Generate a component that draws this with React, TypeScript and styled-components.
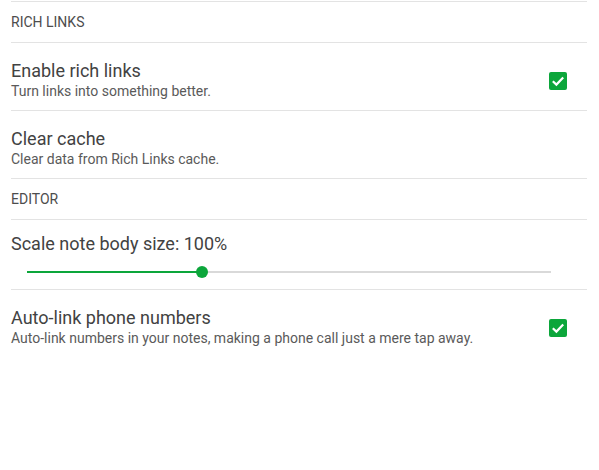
import React from "react";
import styled, { createGlobalStyle } from "styled-components";

const GlobalStyle = createGlobalStyle`
  body {
    margin: 0;
    background: #fff;
    font-family: Roboto, "Noto Sans", sans-serif;
  }
`;

const Page = styled.div`
  padding: 1px 12px 0 11px;
`;

const List = styled.div`
  border-top: 1px solid #e3e3e3;
  display: flex;
  flex-direction: column;
`;

const Header = styled.div`
  height: 40px;
  display: flex;
  align-items: center;
  font-size: 14px;
  color: #4d4d4d;
  text-transform: uppercase;
  border-bottom: 1px solid #e3e3e3;
`;

const Row = styled.div<{ last?: boolean }>`
  display: flex;
  align-items: center;
  padding: 17px 20px 10px 0;
  height: 40px;
  border-bottom: ${(p) => (p.last ? "none" : "1px solid #e3e3e3")};
`;

const TextBlock = styled.div`
  flex: 1;
  display: flex;
  flex-direction: column;
`;

const Title = styled.div`
  font-size: 18px;
  line-height: 22px;
  color: #424242;
`;

const Summary = styled.div`
  font-size: 14px;
  line-height: 18px;
  color: #5a5a5a;
`;

const Checkbox = styled.div`
  width: 18px;
  height: 18px;
  margin-top: 2px;
  border-radius: 2px;
  background: #0ca63b;
  display: flex;
  align-items: center;
  justify-content: center;
`;

const SliderRow = styled.div`
  padding: 13px 0 0 0;
  height: 56px;
  border-bottom: 1px solid #e3e3e3;
`;

const Track = styled.div`
  position: relative;
  margin: 16px 36px 0 16px;
  height: 2px;
  background: #d9d9d9;
`;

const Fill = styled.div`
  height: 2px;
  background: #0ca63b;
`;

const Thumb = styled.div`
  position: absolute;
  top: -5px;
  width: 12px;
  height: 12px;
  margin-left: -6px;
  border-radius: 50%;
  background: #0ca63b;
`;

const Check = () => (
  <Checkbox>
    <svg width="14" height="14" viewBox="0 0 14 14">
      <path d="M1.8 7.3 L5.4 10.6 L12.2 3.6" fill="none" stroke="#fff" strokeWidth="2.2" />
    </svg>
  </Checkbox>
);

const Preference = ({
  title,
  summary,
  checked,
  last,
}: {
  title: string;
  summary: string;
  checked?: boolean;
  last?: boolean;
}) => (
  <Row last={last}>
    <TextBlock>
      <Title>{title}</Title>
      <Summary>{summary}</Summary>
    </TextBlock>
    {checked && <Check />}
  </Row>
);

export default function App() {
  const value = 33.4;
  return (
    <Page>
      <GlobalStyle />
      <List>
        <Header>Rich Links</Header>
        <Preference title="Enable rich links" summary="Turn links into something better." checked />
        <Preference title="Clear cache" summary="Clear data from Rich Links cache." />
        <Header>Editor</Header>
        <SliderRow>
          <Title>Scale note body size: 100%</Title>
          <Track>
            <Fill style={{ width: `${value}%` }} />
            <Thumb style={{ left: `${value}%` }} />
          </Track>
        </SliderRow>
        <Preference
          title="Auto-link phone numbers"
          summary="Auto-link numbers in your notes, making a phone call just a mere tap away."
          checked
          last
        />
      </List>
    </Page>
  );
}
